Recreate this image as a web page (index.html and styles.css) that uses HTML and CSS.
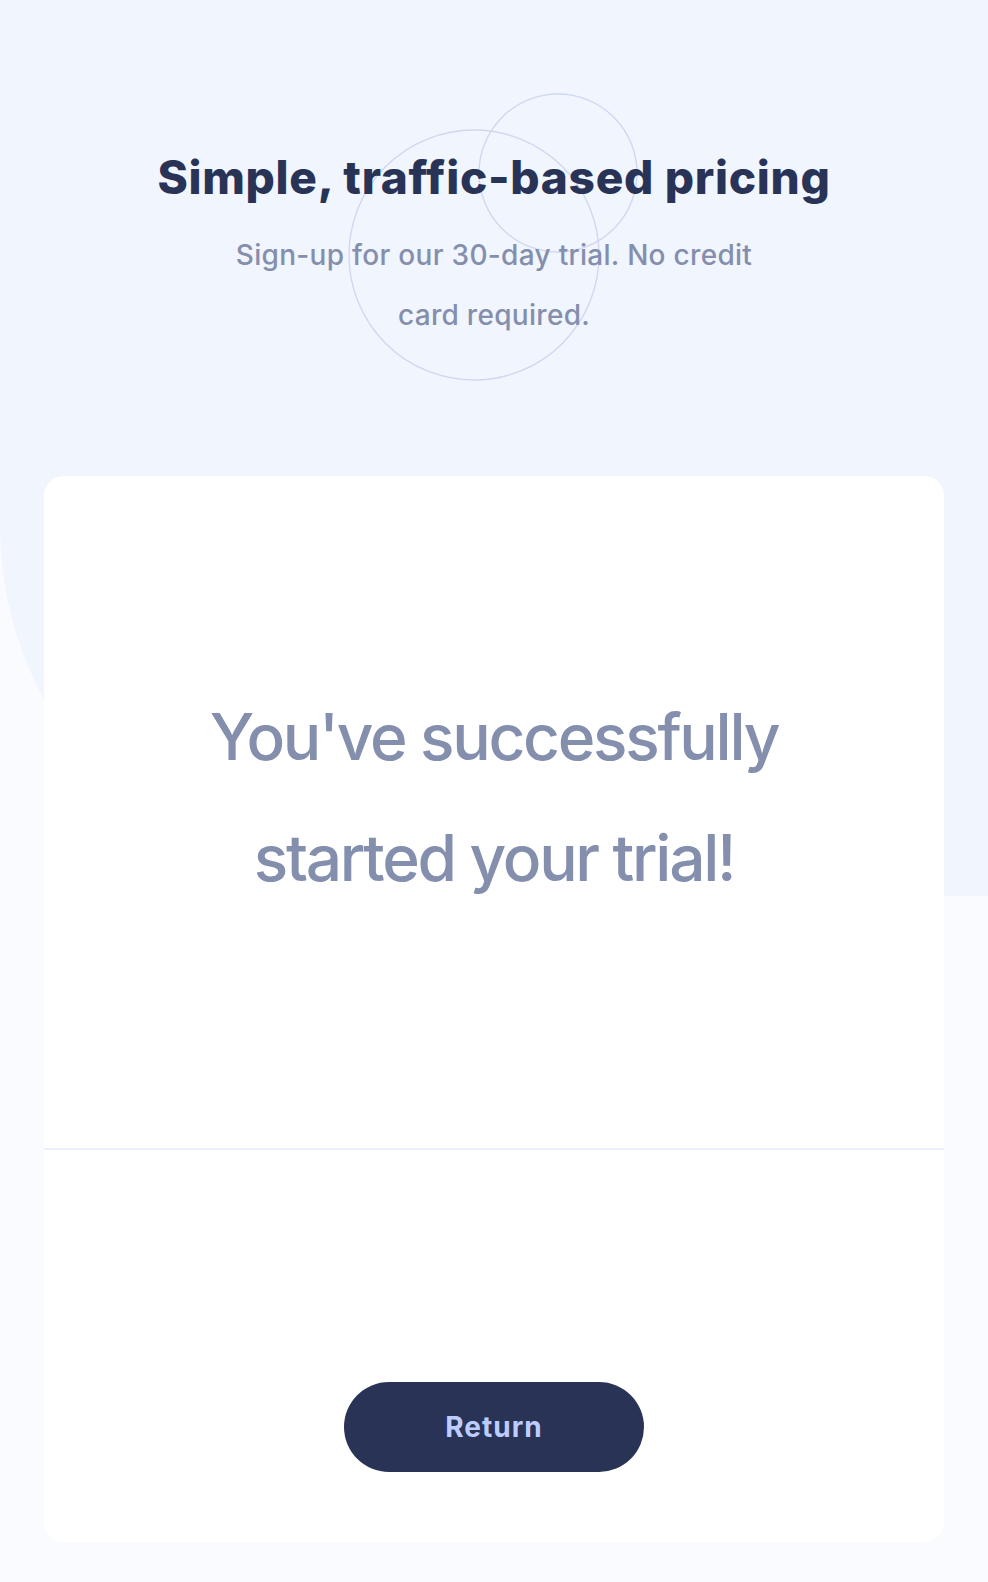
FILE: index.html
```html
<!DOCTYPE html>
<html lang="en">
<head>
<meta charset="utf-8">
<title>Pricing</title>
<link rel="stylesheet" href="styles.css">
</head>
<body>
<div class="page">
  <header class="hero">
    <svg class="circles" viewBox="0 0 146 145" width="292" height="290" aria-hidden="true">
      <g fill="none" stroke="#CFD8EF" stroke-width="0.7">
        <circle cx="63.5" cy="81.5" r="62.5"/>
        <circle cx="105.5" cy="40.5" r="39.5"/>
      </g>
    </svg>
    <h1 class="title">Simple, traffic-based pricing</h1>
    <p class="subtitle">Sign-up for our 30-day trial. No credit card required.</p>
  </header>
  <main class="card">
    <section class="card-top">
      <p class="message">You've successfully started your trial!</p>
    </section>
    <section class="card-bottom">
      <button class="btn" type="button">Return</button>
    </section>
  </main>
</div>
</body>
</html>
```

FILE: styles.css
```css
* { box-sizing: border-box; }
html, body { margin: 0; padding: 0; }
body {
  background: #fafbff;
  font-family: "Inter", "Noto Sans", sans-serif;
}
.page {
  position: relative;
  padding-bottom: 40px;
}
.page::before {
  content: "";
  position: absolute;
  left: 0; top: 0; right: 0;
  height: 896px;
  background: #f1f5fe;
  border-bottom-left-radius: 371px;
  z-index: 0;
}
.hero {
  position: relative;
  z-index: 1;
  padding-top: 149px;
  text-align: center;
  height: 476px;
}
.circles {
  position: absolute;
  top: 92px;
  left: 50%;
  margin-left: -147px;
  z-index: -1;
}
.title {
  margin: 0;
  font-size: 46px;
  line-height: 56px;
  font-weight: 800;
  color: #293356;
  letter-spacing: 0.7px;
}
.subtitle {
  margin: 20px auto 0;
  width: 560px;
  font-size: 28px;
  line-height: 60px;
  font-weight: 500;
  color: #848ead;
  letter-spacing: 0.3px;
}
.card {
  position: relative;
  z-index: 1;
  margin: 0 44px;
  background: #fff;
  border-radius: 20px;
  height: 1066px;
  display: flex;
  flex-direction: column;
}
.card-top {
  height: 674px;
  border-bottom: 2px solid #ecf0fb;
  padding-top: 200px;
  text-align: center;
}
.message {
  margin: 0 auto;
  width: 640px;
  font-size: 64px;
  line-height: 121px;
  font-weight: 500;
  color: #848ead;
  letter-spacing: -2.3px;
}
.card-bottom {
  flex: 1;
  display: flex;
  align-items: flex-end;
  justify-content: center;
  padding-bottom: 70px;
}
.btn {
  width: 300px;
  height: 90px;
  border: 0;
  border-radius: 45px;
  background: #293356;
  color: #bdccff;
  font-family: inherit;
  font-size: 28px;
  font-weight: 700;
  letter-spacing: 1px;
  cursor: pointer;
}
```
